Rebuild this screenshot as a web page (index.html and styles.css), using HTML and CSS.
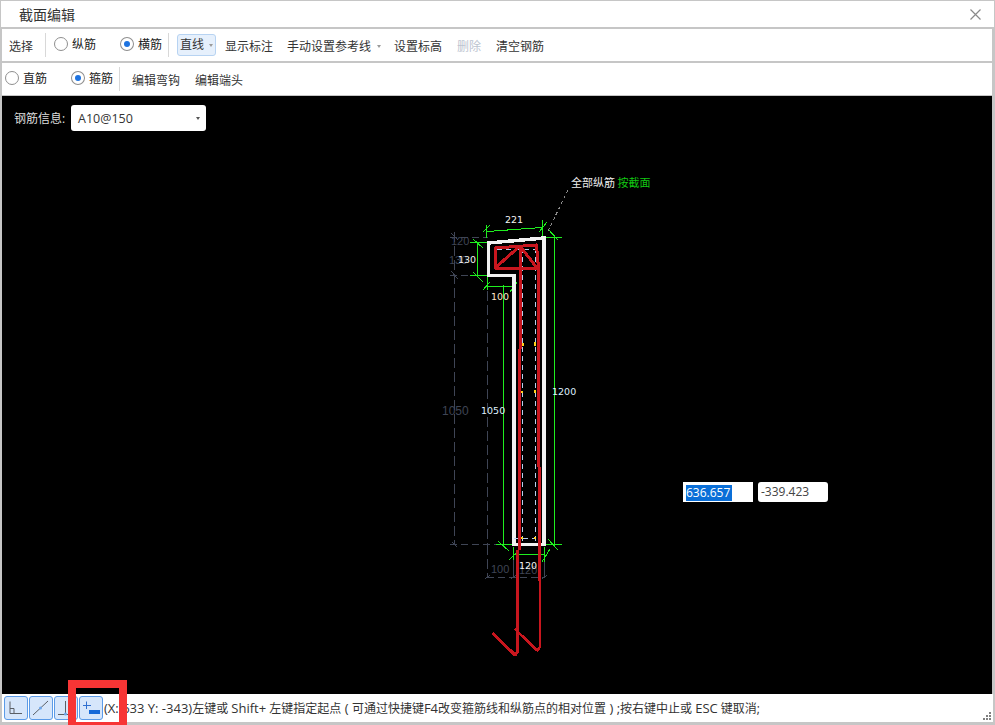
FILE: index.html
```html
<!DOCTYPE html>
<html lang="zh">
<head>
<meta charset="utf-8">
<title>截面编辑</title>
<link rel="stylesheet" href="styles.css">
</head>
<body>
<div class="window">
  <header class="titlebar">
    <span class="title">截面编辑</span>
    <svg class="close" width="11" height="11" viewBox="0 0 11 11"><path d="M0.5 0.500L10.500 10.500M10.500 0.500L0.500 10.500" stroke="#8a8a8a" stroke-width="1.200" fill="none"/></svg>
  </header>
  <div class="body">
    <div class="toolbar tb1">
      <span class="item first">选择</span>
      <span class="sep sep1"></span>
      <label class="radio r1"><i class="dot"></i>纵筋</label>
      <label class="radio r2"><i class="dot on"></i>横筋</label>
      <span class="sep sep2"></span>
      <span class="item active">直线<i class="caret"></i></span>
      <span class="item i3">显示标注</span>
      <span class="item i4">手动设置参考线<i class="caret wide"></i></span>
      <span class="item i5">设置标高</span>
      <span class="item i6 disabled">删除</span>
      <span class="item i6">清空钢筋</span>
    </div>
    <div class="toolbar tb2">
      <label class="radio r3"><i class="dot"></i>直筋</label>
      <label class="radio r4"><i class="dot on"></i>箍筋</label>
      <span class="sep sep3"></span>
      <span class="item i7">编辑弯钩</span>
      <span class="item i8">编辑端头</span>
    </div>
    <main class="canvas">
      <svg class="drawing" width="991" height="598" viewBox="2 96 991 598">
        <g fill="none" stroke="#3f4555" stroke-width="1">
          <path stroke-dasharray="10 4" d="M454.500 232V545"/>
          <path stroke-dasharray="10 4" d="M487.500 545V577"/>
          <path stroke-dasharray="10 4" d="M487.500 277V545"/>
          <path stroke-dasharray="7 4" d="M450 237.500H488M450 275.500H488"/>
          <path stroke-dasharray="7 4" d="M450 544.500H514"/>
          <path stroke-dasharray="7 4" d="M487 577.500H545"/>
          <path d="M513.500 560V578M544.500 562V578"/>
          <path d="M451 233L458 240M451 271L458 279M452 542L457 547M485 579L490 575M511 579L516 575M542 579L547 575"/>
        </g>
        <g fill="none" stroke="#1fee1f" stroke-width="1">
          <path d="M554.500 237V545M503.500 285V545"/>
          <path d="M487 231.500L542 227.500"/>
          <path d="M486.500 225V238M542.500 220V236"/>
          <path d="M470 242.500H487M470 275.500H487M497 275.500H512M477.500 242V275"/>
          <path d="M487 286.500H514M487.500 277V290M513.500 278V292"/>
          <path d="M545 237.500H562M496 544.500H513M545 544.500H562"/>
          <path d="M513 554.500H545M513.500 547V560M544.500 547V562"/>
          <path d="M473 239L483 248M473 272L483 282M483 290L490 282M510 292L517 282M548 229L558 240M548 539L558 550M498 541L509 551M509 560L518 551M542 562L550 549M483 232L490 225M539 232L547 222"/>
        </g>
        <path d="M548 231L569 188" fill="none" stroke="#8c8c8c" stroke-width="1" stroke-dasharray="3 3"/>
        <path d="M488.500 243L544 238V544.500H514V275.500H488.500Z" fill="none" stroke="#f2f2f2" stroke-width="3.500"/>
        <g fill="none" stroke="#b8d0ee" stroke-width="1" stroke-dasharray="5 4">
          <path d="M496.500 249.500H536M496.500 267.500H536M496.500 249V268M522.500 248V544M535.500 248V544M514 538.500H536"/>
        </g>
        <path d="M521 344H523V346M534 343H535V346M521 392H523M534 391H535V393M521 538H523M534 538H536" stroke="#ffd21e" stroke-width="1.500" fill="none"/>
        <g fill="none" stroke="#c8161e" stroke-linejoin="round">
          <path stroke-width="3" d="M520 349V246L495 268V248L536.500 245L538.500 268H495M520 246L537 268"/>
          <path stroke-width="3" d="M519 349V550"/>
          <path stroke-width="3" d="M538.500 268L539.300 581"/>
          <path stroke-width="3" d="M517.500 550V652L515 655L492.500 633"/>
          <path stroke-width="2.500" d="M540 581V647L537.300 650.500L515 629"/>
        </g>
        <g class="lbl">
          <text x="451" y="245" class="dk">120</text>
          <text x="449" y="264" class="dk">130</text>
          <text x="442" y="415" class="dk big">1050</text>
          <text x="491" y="573" class="dk">100</text>
          <text x="519" y="574" class="dk">120</text>
          <text x="505" y="223" class="wt">221</text>
          <text x="458" y="263" class="wt">130</text>
          <text x="491" y="300" class="wt or">100</text>
          <text x="481" y="414" class="wt bl">1050</text>
          <text x="552" y="395" class="wt bl">1200</text>
          <text x="519" y="569" class="wt">120</text>
          <text x="571" y="187" class="cap">全部纵筋 <tspan class="grn">按截面</tspan></text>
        </g>
      </svg>
      <div class="bar-info">
        <span class="bar-label">钢筋信息:</span>
        <div class="combo"><span>A10@150</span><i class="caret dark"></i></div>
      </div>
      <div class="coord coord-x"><span class="sel">636.657</span></div>
      <div class="coord coord-y">-339.423</div>
    </main>
    <footer class="status">
      <div class="tools">
        <button class="tool"><svg width="24" height="24" viewBox="0 0 24 24"><path d="M6 5.500V17.500H18M6 12.500H10V17.500" fill="none" stroke="#5a5f66"/></svg></button>
        <button class="tool"><svg width="24" height="24" viewBox="0 0 24 24"><path d="M4 19L19 5" stroke="#5a5f66" fill="none"/><circle cx="11.500" cy="12" r="1.500" fill="#6ea6ea"/></svg></button>
        <button class="tool"><svg width="24" height="24" viewBox="0 0 24 24"><path d="M11.500 5V18M4 18.500H15" stroke="#5a5f66" fill="none"/><circle cx="11.500" cy="18" r="1.500" fill="#6ea6ea"/></svg></button>
        <button class="tool"><svg width="24" height="24" viewBox="0 0 24 24"><path d="M4 9.500H12M7.500 5.500V13" stroke="#2f6fd0" fill="none"/><rect x="10" y="14" width="11" height="4" fill="#1569d8"/></svg></button>
      </div>
      <span class="msg"><span class="lat">(X: 633 Y: -343)</span>左键或 <span class="lat">Shift+</span> 左键指定起点<span class="lat"> ( </span>可通过快捷键<span class="lat">F4</span>改变箍筋线和纵筋点的相对位置<span class="lat"> ) ;</span>按右键中止或 <span class="lat">ESC</span> 键取消;</span>
      <svg class="grip" width="8" height="8" viewBox="0 0 8 8"><path d="M6 0h2v2H6zM3 3h2v2H3zM6 3h2v2H6zM0 6h2v2H0zM3 6h2v2H3zM6 6h2v2H6z" fill="#808080"/></svg>
    </footer>
  </div>
  <div class="highlight"></div>
</div>
</body>
</html>
```
FILE: styles.css
```css
* { box-sizing: border-box; }
html, body { margin: 0; height: 100%; overflow: hidden; }
body {
  background: #c6c6c6;
  font-family: "Open Sans", "Noto Sans CJK SC", "Liberation Sans", sans-serif;
  font-size: 12px;
  color: #333;
}
.window {
  position: relative;
  width: 995px;
  height: 725px;
  padding: 1px 1px 3px 1px;
  display: flex;
  flex-direction: column;
}
.titlebar {
  height: 26px;
  flex: none;
  background: #fff;
  display: flex;
  align-items: center;
  justify-content: space-between;
  padding: 0 13px 0 18px;
}
.title { font-size: 14px; color: #333; }
.body {
  flex: 1;
  display: flex;
  flex-direction: column;
  padding: 2px 2px 0 1px;
  min-height: 0;
}
.toolbar {
  flex: none;
  height: 32px;
  background: #fff;
  display: flex;
  align-items: center;
  white-space: nowrap;
}
.tb1 { margin-bottom: 2px; padding-left: 7px; }
.tb2 { margin-bottom: 1px; padding-left: 3px; }
.item { display: inline-flex; align-items: center; line-height: 20px; padding-top: 3px; }
.first { width: 24px; }
.sep { width: 1px; height: 24px; background: #d8d8d8; flex: none; }
.sep1 { margin: 0 8px 0 12px; }
.sep2 { margin: 0 8px 0 6px; }
.sep3 { margin: 0 12px 0 6px; }
.radio { display: inline-flex; align-items: center; color: #222; margin-bottom: 2px; }
.dot {
  display: inline-block;
  width: 14px;
  height: 14px;
  border: 1px solid #8f8f8f;
  border-radius: 50%;
  background: #fff;
  margin-right: 4px;
  position: relative;
}
.dot.on::after {
  content: "";
  position: absolute;
  left: 3px;
  top: 3px;
  width: 6px;
  height: 6px;
  border-radius: 50%;
  background: #1e73e0;
}
.r1, .r3 { width: 66px; }
.r2, .r4 { width: 42px; }
.item.active {
  width: 39px;
  height: 22px;
  padding: 0 0 0 2px;
  background: #e6f0fc;
  border: 1px solid #b7d3f2;
  border-radius: 3px;
}
.caret {
  display: inline-block;
  width: 0;
  height: 0;
  margin-left: 5px;
  border-left: 2.500px solid transparent;
  border-right: 2.500px solid transparent;
  border-top: 3px solid #9a9a9a;
}
.caret.wide { margin-left: 6px; }
.caret.dark { border-top-color: #555; margin: 0; }
.i3 { margin-left: 9px; }
.i4 { margin-left: 14px; }
.i5 { margin-left: 13px; }
.i6 { margin-left: 15px; }
.i8 { margin-left: 15px; }
.disabled { color: #bcc4d0; }
.canvas {
  position: relative;
  flex: 1;
  min-height: 0;
  background: #000;
  padding: 9px 0 0 12px;
}
.drawing { position: absolute; left: 0; top: 0; display: block; shape-rendering: crispEdges; }
.bar-info { position: relative; display: flex; align-items: center; gap: 4px; color: #ddd; }
.bar-label { width: 53px; }
.combo {
  width: 135px;
  height: 26px;
  background: #fff;
  border-radius: 3px;
  color: #333;
  font-size: 12.500px;
  display: flex;
  align-items: center;
  justify-content: space-between;
  padding: 0 6px 0 7px;
}
.lbl text { font-family: "DejaVu Sans", sans-serif; font-size: 9.500px; }
.wt { fill: #f4f4f4; }
.bl { fill: #dff0ff; }
.or { fill: #ffe6c8; }
.lbl .dk { fill: #3f4555; font-family: "Liberation Sans", sans-serif; font-size: 11px; }
.lbl .big { font-size: 12px; }
.lbl .cap { font-family: "Noto Sans CJK SC", sans-serif; font-size: 11px; fill: #eee; }
.grn { fill: #12c812; }
.coord {
  position: absolute;
  top: 386px;
  width: 70px;
  height: 20px;
  background: #fff;
  font-size: 12px;
  color: #444;
  line-height: 20px;
  padding-left: 3px;
}
.coord-x { left: 681px; }
.coord-y { left: 756px; border-radius: 3px; }
.sel { display: inline-block; width: 46px; height: 16px; line-height: 16px; background: #0a6fd8; color: #fff; margin-top: 3px; vertical-align: top; }
.status {
  flex: none;
  height: 28px;
  background: #fff;
  display: flex;
  align-items: center;
  position: relative;
  padding-left: 2px;
  margin-right: -1px;
}
.tools { display: flex; gap: 1px; }
.tool {
  width: 24px;
  height: 24px;
  padding: 0;
  border: 1px solid #5b9be8;
  border-radius: 3px;
  background: #d6e6fb;
  display: block;
}
.tool svg { display: block; margin: -1px; }
.msg { margin-left: 1px; white-space: pre; font-size: 12px; color: #333; }
.lat { font-size: 13px; }
.grip { position: absolute; right: 2px; bottom: 2px; }
.highlight {
  position: absolute;
  left: 68px;
  top: 680px;
  width: 59px;
  height: 50px;
  border: 8px solid #f73535;
}
```
